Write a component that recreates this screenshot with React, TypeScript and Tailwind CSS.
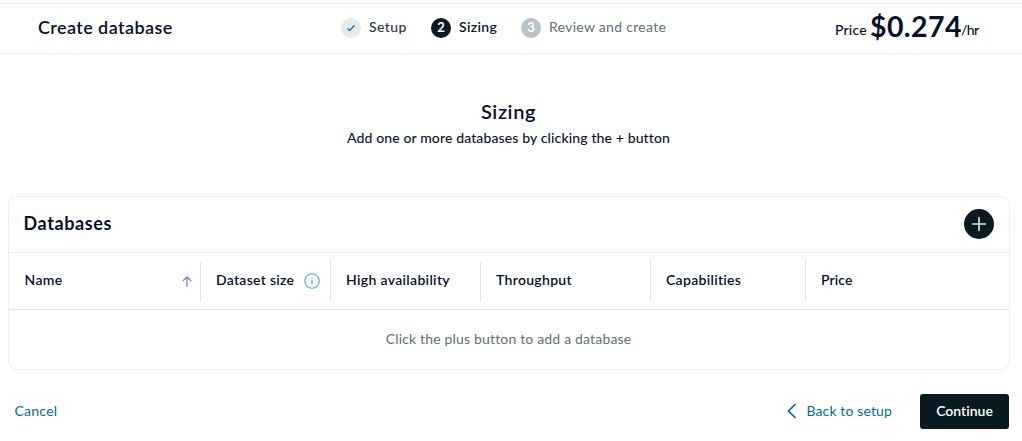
import type { ReactNode } from 'react';

type StepProps = { marker: ReactNode; markerClass: string; label: string; labelClass: string; width: string };

function Step({ marker, markerClass, label, labelClass, width }: StepProps) {
  return (
    <li className={`flex items-center gap-2 ${width}`}>
      <span className={`flex h-5 w-5 items-center justify-center rounded-full text-[13px] leading-none font-bold text-white ${markerClass}`}>
        {marker}
      </span>
      <span className={`pb-px whitespace-nowrap ${labelClass}`}>{label}</span>
    </li>
  );
}

function CheckIcon() {
  return (
    <svg width="8" height="8" viewBox="0 0 8 8" fill="none" stroke="#0b7ba3" strokeWidth="1.4">
      <path d="M.5 4.6 2.6 6.6 7.4 1.2" />
    </svg>
  );
}

function ArrowUpIcon() {
  return (
    <svg width="10" height="11" viewBox="0 0 10 11" fill="none" stroke="#7079c8" strokeWidth="1.2">
      <path d="M5 10.8V1.2M.8 5 5 .9 9.2 5" />
    </svg>
  );
}

function InfoIcon() {
  return (
    <svg width="16" height="16" viewBox="0 0 16 16" fill="none" stroke="#45a9d3">
      <circle cx="8" cy="8" r="7.2" strokeWidth="1.1" />
      <path d="M8 7v4.6M8 4.2v1.4" strokeWidth="1.2" />
    </svg>
  );
}

const columns = [
  { label: 'Name', width: 'w-[192px] pl-[15.5px]', text: 'tracking-[0.35px]', icon: <ArrowUpIcon />, iconClass: 'ml-auto mr-[8px]' },
  { label: 'Dataset size', width: 'w-[130px] pl-[15px]', text: 'tracking-[0.28px]', icon: <InfoIcon />, iconClass: 'ml-auto mr-[10px]' },
  { label: 'High availability', width: 'w-[150px] pl-[15px]', text: 'tracking-[0.33px]' },
  { label: 'Throughput', width: 'w-[170px] pl-[15px]', text: 'tracking-[0.3px]' },
  { label: 'Capabilities', width: 'w-[155px] pl-[15px]', text: 'tracking-[0.3px]' },
  { label: 'Price', width: 'flex-1 pl-[15px]', text: 'tracking-[0.1px]' },
];

export default function App() {
  return (
    <div className="flex h-[441px] w-[1022px] flex-col bg-white pt-[3px] font-['Lato','Open_Sans',sans-serif] text-[14px] leading-[20px] text-[#091a23]">
      <header className="flex h-[51px] items-center border-y border-[#ececec] pl-[38px]">
        <h1 className="w-[303px] pb-[3px] text-[18px] leading-6 font-semibold tracking-[0.4px] text-[#06122b]">Create database</h1>
        <ol className="flex items-center pb-[2px]">
          <Step width="w-[90px]" marker={<CheckIcon />} markerClass="bg-[#e6eaeb]" label="Setup" labelClass="font-medium tracking-[0.4px] text-[#263b46]" />
          <Step width="w-[90px]" marker="2" markerClass="bg-[#091a23]" label="Sizing" labelClass="font-semibold tracking-[0.35px]" />
          <Step width="w-[150px]" marker="3" markerClass="bg-[#b9c2c6]" label="Review and create" labelClass="tracking-[0.3px] text-[#5c707a]" />
        </ol>
        <p className="ml-[164px] flex items-end whitespace-nowrap text-[#06122b]">
          <span className="w-[35px] pb-[9px] font-medium tracking-[0.2px]">Price</span>
          <span className="w-[91px] pb-[5px] text-[28.5px] leading-9 font-bold tracking-[0.4px]">$0.274</span>
          <span className="pb-[9px] font-medium tracking-[-0.6px]">/hr</span>
        </p>
      </header>

      <section className="mt-[45px] flex flex-col items-center pr-[5px] text-[#06122b]">
        <h2 className="text-[20px] leading-6 font-semibold tracking-[0.6px]">Sizing</h2>
        <p className="mt-[5px] font-medium tracking-[0.13px]">Add one or more databases by clicking the + button</p>
      </section>

      <section className="mt-[48px] ml-2 h-[174px] w-[1002px] rounded-[9px] border border-[#ededed] text-[#06122b]">
        <div className="flex h-[56px] items-center justify-between border-b border-[#f1f1f1] pr-[15px] pb-[2px] pl-[14.5px]">
          <h3 className="pb-px text-[18px] leading-6 font-bold tracking-[0.6px]">Databases</h3>
          <button className="flex h-[30px] w-[30px] items-center justify-center rounded-full bg-[#091a23]" aria-label="Add database">
            <svg width="14" height="14" viewBox="0 0 14 14" stroke="#dfe2e4" strokeWidth="1.6">
              <path d="M7 0v14M0 7h14" />
            </svg>
          </button>
        </div>
        <div className="flex h-[57px] items-center border-b border-[#e5e5e5]">
          {columns.map((c, i) => (
            <div
              key={c.label}
              className={`flex h-10 items-center ${i < columns.length - 1 ? 'border-r border-[#e4e4e4]' : ''} ${c.width}`}
            >
              <span className={`pb-[2px] font-semibold whitespace-nowrap ${c.text}`}>{c.label}</span>
              {c.icon && <span className={c.iconClass}>{c.icon}</span>}
            </div>
          ))}
        </div>
        <p className="flex h-[59px] items-center justify-center pr-px pb-[2px] tracking-[0.17px] text-[#5c707a]">Click the plus button to add a database</p>
      </section>

      <footer className="mt-[24px] flex h-[35px] items-center pr-[13px] pl-[14.5px] text-[#006d98]">
        <button className="pb-[2px] tracking-[0.25px]">Cancel</button>
        <button className="ml-auto flex items-center gap-[9px] tracking-[0.13px]">
          <svg className="mb-[2px]" width="11" height="16" viewBox="0 0 11 16" fill="none" stroke="currentColor" strokeWidth="1.7">
            <path d="M9.5 1 2.5 8l7 7" />
          </svg>
          <span className="pb-[2px]">Back to setup</span>
        </button>
        <button className="ml-[28px] h-[35px] w-[89px] rounded-[3px] bg-[#091a23] pb-px font-semibold tracking-[0.01px] text-white">Continue</button>
      </footer>
    </div>
  );
}
